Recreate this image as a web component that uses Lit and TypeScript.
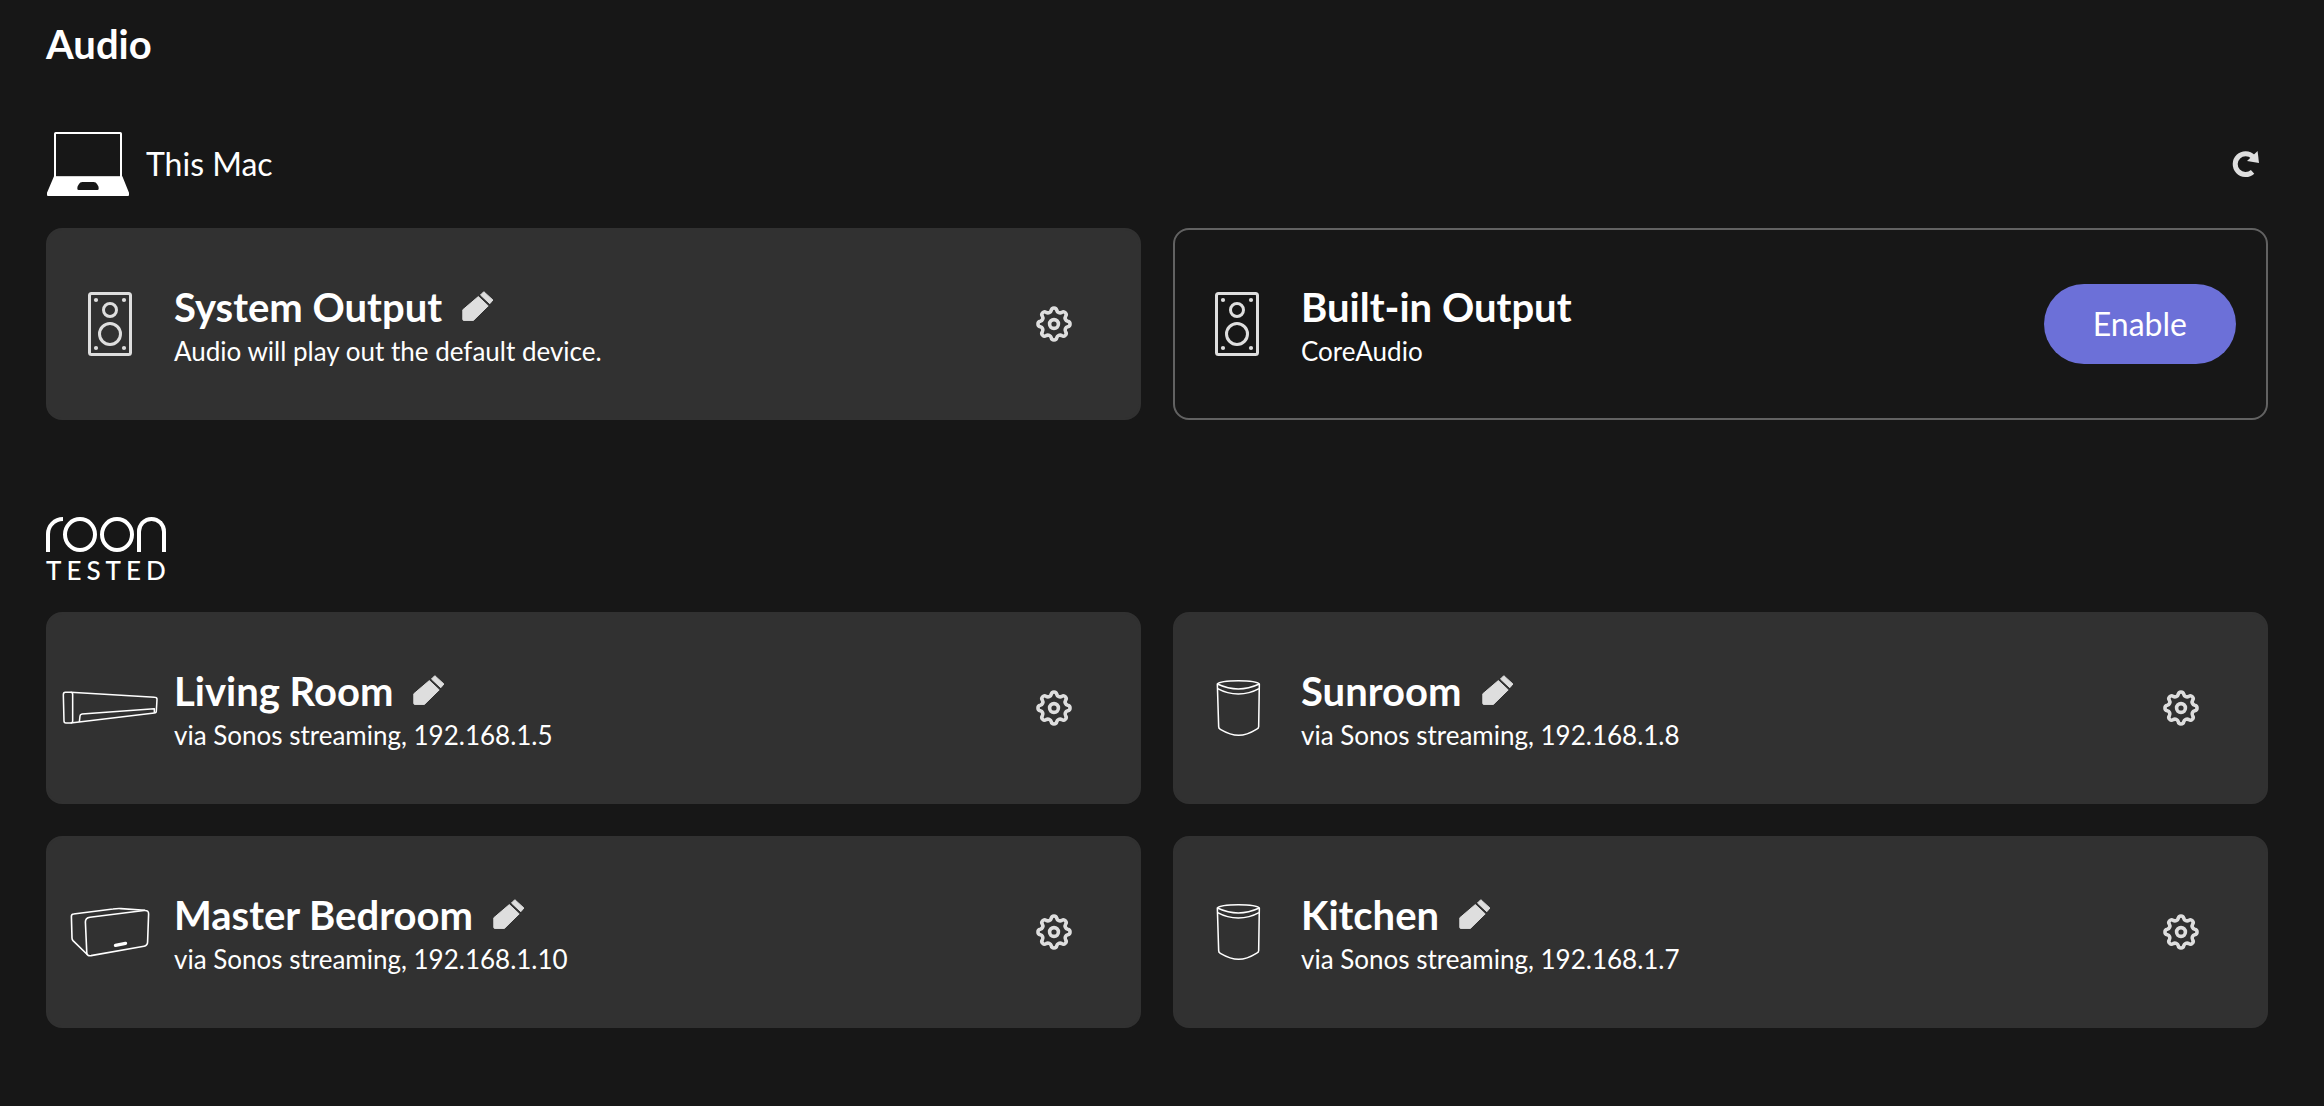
import { LitElement, html, css, svg, nothing } from "lit";
import { customElement, property } from "lit/decorators.js";

type Kind = "speaker" | "soundbar" | "cylinder" | "box";

interface Zone {
  name: string;
  detail: string;
  kind: Kind;
  enabled: boolean;
}

const LOCAL_ZONES: Zone[] = [
  { name: "System Output", detail: "Audio will play out the default device.", kind: "speaker", enabled: true },
  { name: "Built-in Output", detail: "CoreAudio", kind: "speaker", enabled: false },
];

const TESTED_ZONES: Zone[] = [
  { name: "Living Room", detail: "via Sonos streaming, 192.168.1.5", kind: "soundbar", enabled: true },
  { name: "Sunroom", detail: "via Sonos streaming, 192.168.1.8", kind: "cylinder", enabled: true },
  { name: "Master Bedroom", detail: "via Sonos streaming, 192.168.1.10", kind: "box", enabled: true },
  { name: "Kitchen", detail: "via Sonos streaming, 192.168.1.7", kind: "cylinder", enabled: true },
];

/* Eight rounded teeth: arcs bulging outwards and inwards in turn. */
function gearOutline(): string {
  const point = (i: number) => {
    const angle = ((i * 22.5 - 11.25) * Math.PI) / 180;
    return `${(18 + 14 * Math.sin(angle)).toFixed(2)} ${(18 - 14 * Math.cos(angle)).toFixed(2)}`;
  };
  let d = `M${point(0)}`;
  for (let i = 1; i <= 16; i++) {
    d += i % 2 ? `A2.77 2.77 0 0 1 ${point(i)}` : `A3.36 3.36 0 0 0 ${point(i)}`;
  }
  return d + "Z";
}

const gearIcon = html`<svg width="36" height="36" viewBox="0 0 36 36" fill="none" stroke="currentColor" stroke-width="3.6" stroke-linejoin="round" aria-hidden="true">
  <path d=${gearOutline()} />
  <circle cx="18" cy="18" r="4.4" />
</svg>`;

const pencilIcon = html`<svg width="32" height="30" viewBox="0 0 32 30" fill="currentColor" stroke="currentColor" stroke-width="1" stroke-linejoin="round" aria-hidden="true">
  <path d="M0.8 18.8L16.3 5.6L26.2 14.9L11.4 29.4H1.6Q0.8 29.4 0.8 28.6Z" />
  <path d="M18.5 4L21.8 0.7L30.9 9L27.8 12.7Z" />
</svg>`;

const refreshIcon = html`<svg width="28" height="28" viewBox="0 0 28 28" aria-hidden="true">
  <path d="M20.6 21.8A10.4 10.4 0 1 1 21 6.8" fill="none" stroke="currentColor" stroke-width="5" />
  <path d="M25.6 1L27 13L15 11Z" fill="currentColor" />
</svg>`;

const laptopIcon = html`<svg width="84" height="64" viewBox="-3 0 252 192" aria-hidden="true">
  <rect x="24" y="3" width="198" height="134" rx="2" fill="none" stroke="currentColor" stroke-width="6" />
  <path fill="currentColor" fill-rule="evenodd" d="M21 133H226L246 182V189Q246 192 243 192H3Q0 192 0 189V182ZM106 150Q99 150 96 156L92 163Q91 166 91 170Q91 174 95 174H151Q155 174 155 170Q155 166 154 163L150 156Q147 150 140 150Z" />
</svg>`;

const deviceIcons = {
  speaker: html`<svg width="44" height="64" viewBox="0 0 44 64" fill="none" stroke="#dedede" stroke-width="3" aria-hidden="true">
    <rect x="1.5" y="1.5" width="41" height="61" rx="2" />
    <circle cx="22" cy="18" r="6.5" />
    <circle cx="22" cy="42" r="10.5" />
    ${[8, 36].map((x) => [8, 56].map((y) => svg`<circle cx=${x} cy=${y} r="2.1" fill="#dedede" stroke="none" />`))}
  </svg>`,
  soundbar: html`<svg width="96" height="34" viewBox="66 153 288 102" fill="none" stroke="#fff" stroke-width="4.6" stroke-linejoin="round" aria-hidden="true">
    <path d="M76 157H92Q98 157 98 163V243Q98 249 92 249H78Q72 249 72 243L70 164Q70 157 76 157Z" />
    <path d="M92 157L344 172Q351 172 351 178L349 213Q349 219 343 219L92 249" />
    <path d="M118 246L120 228Q120 223 126 222L343 206V218" />
  </svg>`,
  cylinder: html`<svg width="48" height="58" viewBox="129 117 144 174" fill="none" stroke="#fff" stroke-width="4.6" stroke-linejoin="round" aria-hidden="true">
    <path d="M142 132Q150 122 205 122Q260 122 268 132L266 260Q266 265 259 268Q230 286 206 286Q182 286 151 268Q146 265 146 260Z" />
    <path d="M142 132Q175 147 205 147Q235 147 268 132" />
    <path d="M143 146Q172 162 205 162Q238 162 267 146" />
  </svg>`,
  box: html`<svg width="80" height="50" viewBox="0 0 80 50" fill="none" stroke="#fff" stroke-width="1.6" stroke-linejoin="round" aria-hidden="true">
    <path d="M17.5 47.8L3 33.6Q2 32.5 2 31L1.4 9.5Q1.3 7.2 3.5 7L43 2Q47 1.4 51 1.6L75 3.2" />
    <path d="M20 10.2L74 3.5Q78.8 3 78.6 7L77.6 35Q77.5 38.6 74 39.2L21 48.6Q17 49.2 16.8 46L15.4 15Q15.3 10.8 20 10.2Z" />
    <path d="M45.5 38.4L55.5 36.4" stroke-width="3.4" stroke-linecap="round" />
  </svg>`,
};

@customElement("zone-card")
export class ZoneCard extends LitElement {
  @property({ attribute: false }) zone!: Zone;

  static styles = css`
    :host {
      display: block;
    }
    .card {
      display: grid;
      grid-template-columns: 126px minmax(0, 1fr) auto;
      align-items: center;
      min-height: 192px;
      box-sizing: border-box;
      padding: 24px 30px 24px 0;
      border: 2px solid #313131;
      border-radius: 16px;
      background: #313131;
    }
    .card.available {
      background: #171717;
      border-color: #626262;
    }
    .device {
      display: flex;
      justify-content: center;
      padding-right: 2px;
    }
    .text {
      padding-top: 6px;
    }
    .title {
      display: flex;
      align-items: center;
      gap: 20px;
    }
    h3 {
      margin: 0;
      font-size: 40px;
      line-height: 48px;
      font-weight: 700;
    }
    p {
      margin: 0;
      font-size: 26px;
      line-height: 40px;
    }
    button {
      display: flex;
      align-items: center;
      justify-content: center;
      border: 0;
      padding: 0;
      background: none;
      color: #dedede;
      font: inherit;
      cursor: pointer;
    }
    .edit {
      padding-bottom: 2px;
    }
    .settings {
      width: 110px;
      height: 80px;
    }
    .enable {
      height: 80px;
      padding: 0 49px 2px;
      border-radius: 40px;
      background: #6c70d8;
      color: #fff;
      font-size: 32px;
    }
  `;

  render() {
    const { name, detail, kind, enabled } = this.zone;
    return html`
      <article class="card ${enabled ? "" : "available"}">
        <div class="device">${deviceIcons[kind]}</div>
        <div class="text">
          <div class="title">
            <h3>${name}</h3>
            ${enabled ? html`<button class="edit" type="button" aria-label="Rename ${name}">${pencilIcon}</button>` : nothing}
          </div>
          <p>${detail}</p>
        </div>
        ${enabled
          ? html`<button class="settings" type="button" aria-label="Settings for ${name}">${gearIcon}</button>`
          : html`<button class="enable" type="button">Enable</button>`}
      </article>
    `;
  }
}

@customElement("app-root")
export class AppRoot extends LitElement {
  static styles = css`
    :host {
      display: block;
      min-height: 100vh;
      box-sizing: border-box;
      padding: 20px 56px 64px 46px;
      background: #171717;
      color: #fff;
      font-family: Lato, "Open Sans", sans-serif;
    }
    h1 {
      margin: 0 0 64px;
      font-size: 40px;
      line-height: 48px;
      font-weight: 700;
    }
    section + section {
      margin-top: 96px;
    }
    .head {
      display: flex;
      align-items: center;
      justify-content: space-between;
      height: 64px;
      margin-bottom: 32px;
    }
    .host {
      display: flex;
      align-items: center;
      gap: 16px;
      margin: 0;
      font-size: 32px;
      line-height: 40px;
      font-weight: 400;
    }
    .refresh {
      display: flex;
      padding: 8px;
      border: 0;
      background: none;
      color: #dedede;
      cursor: pointer;
    }
    .grid {
      display: grid;
      grid-template-columns: repeat(2, minmax(0, 1fr));
      gap: 32px;
    }
    .brand {
      display: flex;
      flex-direction: column;
      gap: 6px;
      margin: 0;
      padding-top: 2px;
      font-weight: 500;
    }
    .wordmark {
      display: flex;
      gap: 3px;
      height: 35px;
    }
    .stem,
    .ring,
    .arch {
      box-sizing: border-box;
      border: 4px solid #fff;
    }
    .stem {
      width: 17px;
      border-width: 4px 0 0 4px;
      border-radius: 17px 0 0 0;
    }
    .ring {
      width: 34px;
      border-radius: 50%;
    }
    .stem + .ring {
      margin-left: -3px;
    }
    .arch {
      width: 29px;
      border-bottom: 0;
      border-radius: 15px 15px 0 0;
    }
    .tested {
      font-size: 26px;
      line-height: 24px;
      letter-spacing: 5px;
    }
  `;

  private grid(zones: Zone[]) {
    return html`<div class="grid">${zones.map((zone) => html`<zone-card .zone=${zone}></zone-card>`)}</div>`;
  }

  render() {
    return html`
      <main>
        <h1>Audio</h1>
        <section>
          <div class="head">
            <h2 class="host">${laptopIcon}<span>This Mac</span></h2>
            <button class="refresh" type="button" aria-label="Refresh">${refreshIcon}</button>
          </div>
          ${this.grid(LOCAL_ZONES)}
        </section>
        <section>
          <div class="head">
            <h2 class="brand">
              <span class="wordmark" role="img" aria-label="roon">
                <span class="stem"></span><span class="ring"></span><span class="ring"></span><span class="arch"></span>
              </span>
              <span class="tested">TESTED</span>
            </h2>
          </div>
          ${this.grid(TESTED_ZONES)}
        </section>
      </main>
    `;
  }
}
